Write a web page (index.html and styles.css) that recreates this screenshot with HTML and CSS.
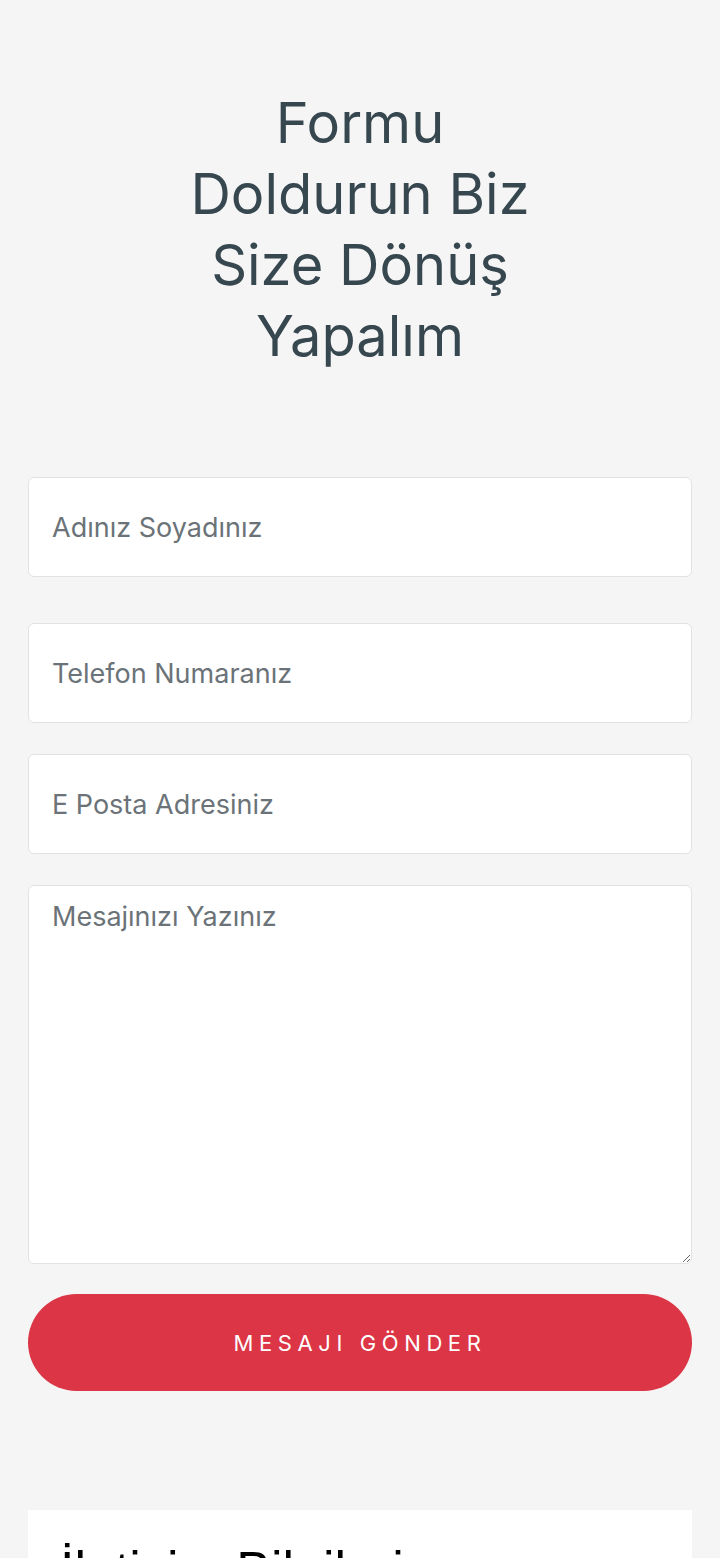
FILE: index.html
```html
<!DOCTYPE html>
<html lang="tr">
<head>
  <meta charset="UTF-8" />
  <meta name="viewport" content="width=device-width, initial-scale=1.0" />
  <title>İletişim</title>
  <link rel="stylesheet" href="styles.css">
</head>
<body>

  <section class="contact-form">
    <h1 class="form-title">Formu Doldurun Biz Size Dönüş Yapalım</h1>

    <form class="form-fields">
      <input type="text" class="field field-first" placeholder="Adınız Soyadınız" />
      <input type="tel" class="field" placeholder="Telefon Numaranız" />
      <input type="email" class="field" placeholder="E Posta Adresiniz" />
      <textarea class="field field-message" placeholder="Mesajınızı Yazınız"></textarea>
      <button type="submit" class="btn-send">Mesajı Gönder</button>
    </form>
  </section>

  <section class="contact-info">
    <h2>İletişim Bilgileri</h2>
  </section>

</body>
</html>
```

FILE: styles.css
```css
body {
  margin: 0;
  background-color: #f5f5f5;
  font-family: Inter, 'Noto Sans', sans-serif;
}

.contact-form {
  padding: 88px 28px 0;
}

.form-title {
  max-width: 380px;
  margin: 0 auto 105px;
  text-align: center;
  font-size: 56px;
  font-weight: 400;
  line-height: 71px;
  color: #37474f;
  letter-spacing: 0;
}

.form-fields {
  display: flex;
  flex-direction: column;
  gap: 31px;
}

.field {
  box-sizing: border-box;
  width: 100%;
  height: 100px;
  padding: 0 23px;
  border: 1px solid #e2e2e2;
  border-radius: 6px;
  background-color: #fff;
  font-family: inherit;
  font-size: 27px;
  color: #333;
  outline: none;
}

.field::placeholder {
  color: #6b7378;
}

.field-first {
  margin-bottom: 15px;
}

.field-message {
  height: 379px;
  padding-top: 12px;
  line-height: 1.4;
  resize: vertical;
}

.btn-send {
  height: 97px;
  margin-top: -1px;
  border: none;
  border-radius: 50px;
  background-color: #dc3545;
  color: #fff;
  font-family: inherit;
  font-size: 22px;
  letter-spacing: 5.6px;
  text-transform: uppercase;
  cursor: pointer;
}

.contact-info {
  margin: 119px 28px 0;
  padding: 30px 32px 40px;
  background-color: #fff;
}

.contact-info h2 {
  margin: 0;
  font-family: 'Liberation Sans', Arial, sans-serif;
  font-size: 52px;
  font-weight: 400;
  color: #000;
}
```
